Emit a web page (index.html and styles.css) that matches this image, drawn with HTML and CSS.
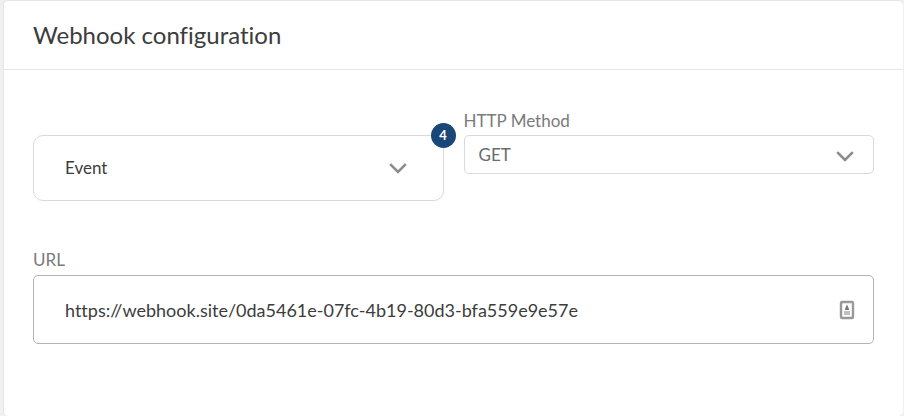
FILE: index.html
```html
<!DOCTYPE html>
<html lang="en">
<head>
  <meta charset="UTF-8">
  <meta name="viewport" content="width=device-width, initial-scale=1.0">
  <title>Webhook configuration</title>
  <link rel="stylesheet" href="styles.css">
</head>
<body>
  <form class="card">
    <header class="card-header">
      <h1>Webhook configuration</h1>
    </header>
    <div class="card-body">
      <div class="row">
        <div class="event">
          <button type="button" class="event-toggle" aria-haspopup="listbox">
            Event
            <svg class="chevron" viewBox="0 0 18 11" aria-hidden="true"><path d="M1.2 1.2 9 9l7.8-7.8"/></svg>
          </button>
          <span class="badge">4</span>
        </div>
        <div class="method">
          <label for="method">HTTP Method</label>
          <div class="select-wrap">
            <select id="method" name="method">
              <option selected>GET</option>
              <option>POST</option>
            </select>
            <svg class="chevron" viewBox="0 0 18 11" aria-hidden="true"><path d="M1.2 1.2 9 9l7.8-7.8"/></svg>
          </div>
        </div>
      </div>
      <div class="url">
        <label for="url">URL</label>
        <div class="url-box">
          <input type="text" id="url" name="url" value="https://webhook.site/0da5461e-07fc-4b19-80d3-bfa559e9e57e">
          <svg class="contact-icon" viewBox="0 0 16 20" aria-hidden="true">
            <rect x="2" y="2" width="12" height="16" rx="1" fill="none" stroke="#999" stroke-width="2.4"/>
            <path d="M8 4.5 9.2 7l1 3H5.8l1-3z" fill="#777"/>
            <path d="M5 12h6M5 14h6" stroke="#aaa" stroke-width="1.4"/>
          </svg>
        </div>
      </div>
    </div>
  </form>
</body>
</html>
```
FILE: styles.css
```css
* {
  box-sizing: border-box;
}

body {
  margin: 0;
  padding: 0 1px 0 3px;
  background-color: #f0f0f0;
  font-family: Lato, sans-serif;
  font-size: 17px;
  font-variant-ligatures: none;
  line-height: 24px;
  color: #3c3c3c;
}

.card {
  min-height: 100vh;
  background-color: #fff;
  border: 1px solid #e6e6e6;
  border-bottom: none;
  border-right: none;
  border-radius: 5px;
}

.card-header {
  padding: 18px 29px;
  border-bottom: 1px solid #e6e6e6;
}

h1 {
  margin: 0;
  font-size: 24px;
  font-weight: 400;
  line-height: 32px;
}

.card-body {
  padding: 39px 29px 40px;
}

.row {
  display: grid;
  grid-template-columns: 1fr 1fr;
  gap: 20px;
}

label {
  display: block;
  color: #7a7a7a;
}

.event {
  position: relative;
  padding-top: 26px;
}

.event-toggle {
  display: flex;
  align-items: center;
  justify-content: space-between;
  width: 100%;
  height: 66px;
  padding: 0 36px 0 31px;
  border: 1px solid #d9d9d9;
  border-radius: 10px;
  background-color: #fff;
  font: inherit;
  color: inherit;
  cursor: pointer;
}

.badge {
  position: absolute;
  top: 14px;
  right: -12px;
  width: 25px;
  height: 25px;
  border-radius: 50%;
  background-color: #194778;
  color: #fff;
  font-size: 13px;
  font-weight: 700;
  line-height: 25px;
  text-align: center;
}

.chevron {
  width: 18px;
  height: 11px;
  fill: none;
  stroke: #8c8c8c;
  stroke-width: 2.6;
}

.select-wrap {
  position: relative;
  margin-top: 2px;
}

select {
  display: block;
  width: 100%;
  height: 39px;
  padding: 0 14px;
  border: 1px solid #d9d9d9;
  border-radius: 5px;
  background-color: #fff;
  appearance: none;
  font: inherit;
  color: #6b6b6b;
}

.select-wrap .chevron {
  position: absolute;
  top: 16px;
  right: 20px;
  pointer-events: none;
}

.url {
  margin-top: 47px;
}

.url-box {
  display: flex;
  align-items: center;
  height: 69px;
  margin-top: 3px;
  padding: 0 18px 0 31px;
  border: 1px solid #b3b3b3;
  border-radius: 5px;
}

input {
  flex: 1;
  min-width: 0;
  padding: 0;
  border: none;
  outline: none;
  background: none;
  font: inherit;
  font-size: 18px;
  font-variant-ligatures: none;
  color: inherit;
}

.contact-icon {
  width: 16px;
  height: 20px;
}
```
